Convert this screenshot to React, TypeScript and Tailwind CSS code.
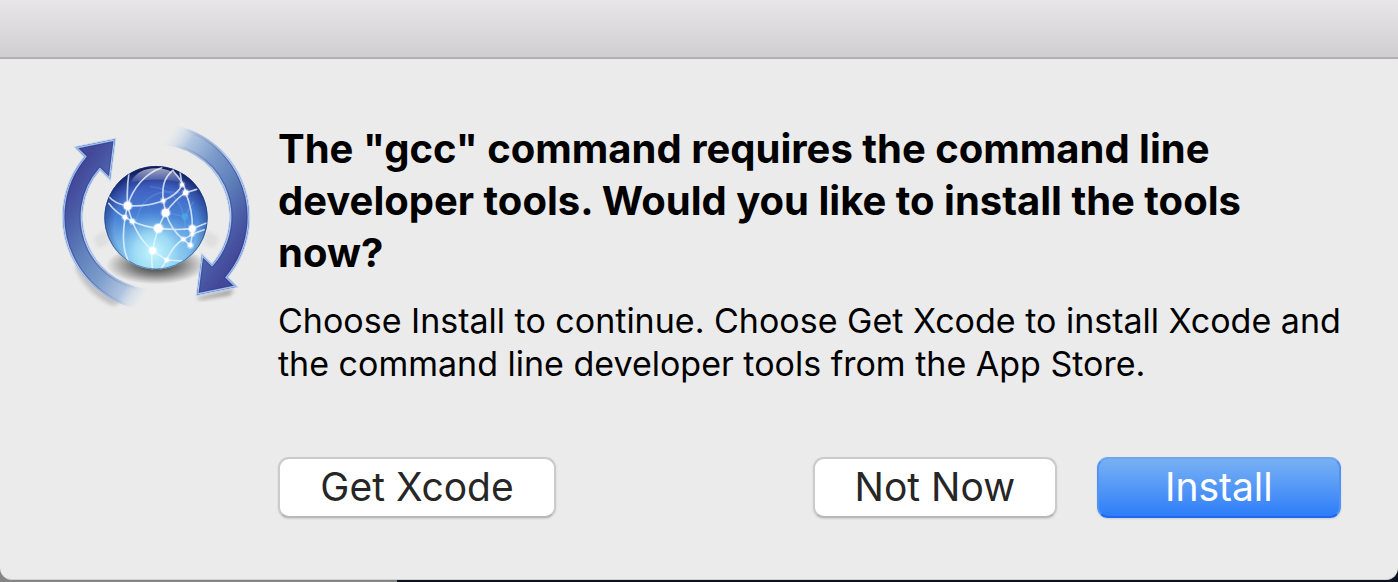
import React from "react";

const ARROW =
  "M77 97 L195 73 L180 193 L150 163 A216 216 0 0 0 320 522 L320 588 A282 282 0 0 1 105 125 Z";

const NODES: [number, number, number][] = [
  [233, 272, 12],
  [225, 307, 7],
  [247, 319, 7],
  [347, 293, 12],
  [325, 340, 13],
  [340, 257, 6],
  [396, 209, 6],
  [407, 233, 8],
  [427, 341, 10],
  [427, 357, 6],
  [400, 373, 6],
  [421, 391, 7],
  [308, 407, 10],
  [350, 435, 6],
];

function SoftwareUpdateIcon() {
  return (
    <svg
      viewBox="0 0 630 600"
      className="h-[200px] w-[210px] shrink-0"
      role="img"
      aria-label="Software Update"
    >
      <defs>
        <linearGradient id="band" gradientUnits="userSpaceOnUse" x1="0" y1="300" x2="320" y2="513">
          <stop offset="0" stopColor="#434998" />
          <stop offset="0.07" stopColor="#4651a0" />
          <stop offset="0.17" stopColor="#4c60a9" />
          <stop offset="0.36" stopColor="#5e7fba" />
          <stop offset="0.6" stopColor="#7c9ccc" />
          <stop offset="0.8" stopColor="#a3bcde" stopOpacity="0.85" />
          <stop offset="0.98" stopColor="#dde6f0" stopOpacity="0" />
        </linearGradient>
        <linearGradient id="rim" gradientUnits="userSpaceOnUse" x1="0" y1="300" x2="300" y2="500">
          <stop offset="0" stopColor="#9dbfee" />
          <stop offset="0.5" stopColor="#b6d3f4" />
          <stop offset="0.95" stopColor="#d5e5f5" stopOpacity="0" />
        </linearGradient>
        <linearGradient id="edge" gradientUnits="userSpaceOnUse" x1="0" y1="300" x2="300" y2="500">
          <stop offset="0" stopColor="#343e96" />
          <stop offset="0.5" stopColor="#4a559c" />
          <stop offset="0.95" stopColor="#6c6690" stopOpacity="0" />
        </linearGradient>
        <linearGradient id="ball" x1="0" y1="0" x2="0" y2="1">
          <stop offset="0" stopColor="#2c3b92" />
          <stop offset="0.25" stopColor="#4265c6" />
          <stop offset="0.5" stopColor="#4a84d6" />
          <stop offset="0.75" stopColor="#76b4e8" />
          <stop offset="1" stopColor="#8fccf0" />
        </linearGradient>
        <radialGradient id="glow" gradientUnits="userSpaceOnUse" cx="310" cy="410" r="125">
          <stop offset="0" stopColor="#c8f6fd" />
          <stop offset="0.45" stopColor="#a8e6f9" stopOpacity="0.75" />
          <stop offset="1" stopColor="#6ab4ea" stopOpacity="0" />
        </radialGradient>
        <radialGradient id="shade" gradientUnits="userSpaceOnUse" cx="318" cy="335" r="184">
          <stop offset="0.68" stopColor="#122268" stopOpacity="0" />
          <stop offset="0.86" stopColor="#122268" stopOpacity="0.45" />
          <stop offset="1" stopColor="#070d3c" stopOpacity="0.95" />
        </radialGradient>
        <linearGradient id="gloss" x1="0" y1="0" x2="0" y2="1">
          <stop offset="0" stopColor="#ffffff" stopOpacity="0.6" />
          <stop offset="1" stopColor="#ffffff" stopOpacity="0.06" />
        </linearGradient>
        <radialGradient id="floor">
          <stop offset="0" stopColor="#000000" stopOpacity="0.8" />
          <stop offset="0.5" stopColor="#000000" stopOpacity="0.45" />
          <stop offset="1" stopColor="#000000" stopOpacity="0" />
        </radialGradient>
        <filter id="soft" x="-20%" y="-20%" width="140%" height="140%">
          <feGaussianBlur stdDeviation="6" />
        </filter>
        <clipPath id="sphere">
          <circle cx="318" cy="308" r="155" />
        </clipPath>
        <clipPath id="inside">
          <path d={ARROW} />
        </clipPath>
        <g id="arrow">
          <path d={ARROW} fill="none" stroke="url(#rim)" strokeWidth="7" opacity="0.6" />
          <path d={ARROW} fill="url(#band)" />
          <g clipPath="url(#inside)" fill="none">
            <path d={ARROW} stroke="url(#edge)" strokeWidth="16" opacity="0.6" />
            <path d={ARROW} stroke="url(#rim)" strokeWidth="8" />
          </g>
        </g>
      </defs>

      <path d="M75 455 C100 515 140 550 190 572 L215 560 C160 535 120 490 95 440 Z" fill="#000000" opacity="0.18" filter="url(#soft)" />
      <path d="M440 548 L552 522 L540 540 L450 554 Z" fill="#000000" opacity="0.35" filter="url(#soft)" />
      <path d="M128 370 L165 345 L180 385 L145 400 Z M508 370 L472 345 L458 385 L492 400 Z" fill="#000000" opacity="0.05" filter="url(#soft)" />
      <ellipse cx="318" cy="450" rx="150" ry="58" fill="url(#floor)" />

      <use href="#arrow" />
      <use href="#arrow" transform="rotate(180 318 306)" />

      <circle cx="318" cy="308" r="155" fill="url(#ball)" />
      <g clipPath="url(#sphere)">
        <circle cx="318" cy="308" r="155" fill="url(#glow)" />
        <circle cx="318" cy="308" r="155" fill="url(#shade)" />
        <g fill="none" stroke="#75c5f4" strokeWidth="4" opacity="0.25">
          <path d="M258 330 C262 265 310 215 390 235" />
          <path d="M300 215 C370 220 410 270 405 360" />
          <path d="M345 293 L405 305 L430 260" />
        </g>
        <circle cx="405" cy="305" r="10" fill="#45baf5" opacity="0.5" />
        <g fill="none" stroke="#e9f5ff" strokeWidth="5" strokeLinecap="round" opacity="0.8">
          <path d="M238 165 C232 205 230 240 233 272 C215 345 215 405 240 448" />
          <path d="M335 158 C285 175 248 220 233 272 C247 335 275 380 308 407 L350 435 L395 438" />
          <path d="M172 240 C190 262 208 270 233 272 C275 275 310 268 340 257 C366 246 388 230 396 209 L390 170" />
          <path d="M176 265 C195 290 210 299 225 307 L247 319 C275 332 300 338 325 340 C370 345 402 344 427 341 L470 324" />
          <path d="M370 165 C338 190 336 223 340 257 L347 293 C330 323 314 370 308 407 C302 430 306 448 308 464" />
          <path d="M347 293 C362 272 380 250 407 233 L440 223" />
          <path d="M347 293 C358 328 375 354 400 373 L421 391 L427 357 L462 344" />
          <path d="M368 167 C392 192 405 210 407 233 C422 270 428 304 427 341" />
          <path d="M427 357 C420 364 410 369 400 373 C377 387 362 408 350 435 L333 462" />
        </g>
        {NODES.map(([x, y, r]) => (
          <g key={`${x}-${y}`} fill="#ffffff">
            <circle cx={x} cy={y} r={r + 4} opacity="0.35" />
            <circle cx={x} cy={y} r={r} />
          </g>
        ))}
        <path d="M243 203 C254 175 280 160 318 160 C356 160 382 175 393 203 C350 190 295 190 243 203 Z" fill="url(#gloss)" />
      </g>
      <circle cx="318" cy="308" r="154" fill="none" stroke="#1d3f85" strokeWidth="3" opacity="0.55" />
    </svg>
  );
}

const plainButton =
  "h-[61px] rounded-[11px] border-2 border-[#cbcbcb] border-b-[#b8b8b8] bg-white pb-[2px] text-[39px] leading-none text-[#262626] shadow-[0_1px_2px_rgba(0,0,0,0.12)]";

export default function App() {
  return (
    <div className="flex min-h-screen flex-col bg-[linear-gradient(90deg,#858585_397px,#0c1220_397px)] pb-[2px] font-[Inter,'Liberation_Sans',sans-serif]">
      <main className="flex grow flex-col overflow-hidden rounded-b-[12px] border-b border-[#cfcfcf] bg-[#ebebeb]">
        <header className="h-[59px] border-b-2 border-[#b1afb1] bg-gradient-to-b from-[#e8e6e9] to-[#d0ced1]" />
        <div className="flex gap-[18px] pt-14 pr-[58px] pl-[50px]">
          <SoftwareUpdateIcon />
          <div className="flex grow flex-col pt-2">
            <h1 className="text-[40px] leading-[52px] font-bold whitespace-nowrap text-black">
              The "gcc" command requires the command line
              <br />
              developer tools. Would you like to install the tools
              <br />
              now?
            </h1>
            <p className="mt-5 text-[34px] leading-[43px] whitespace-nowrap text-black">
              Choose Install to continue. Choose Get Xcode to install Xcode and
              <br />
              the command line developer tools from the App Store.
            </p>
            <div className="mt-[72px] flex gap-10">
              <button type="button" className={`${plainButton} mr-auto w-[278px]`}>
                Get Xcode
              </button>
              <button type="button" className={`${plainButton} w-[244px]`}>
                Not Now
              </button>
              <button
                type="button"
                className="h-[61px] w-[244px] rounded-[11px] border-2 border-[#4f94f2] border-t-[#6aa7ee] border-b-[#1d67f2] bg-gradient-to-b from-[#7ab2f3] to-[#2a7bf9] bg-origin-border pb-[2px] text-[39px] leading-none text-white shadow-[0_1px_2px_rgba(0,0,0,0.12)]"
              >
                Install
              </button>
            </div>
          </div>
        </div>
      </main>
    </div>
  );
}
